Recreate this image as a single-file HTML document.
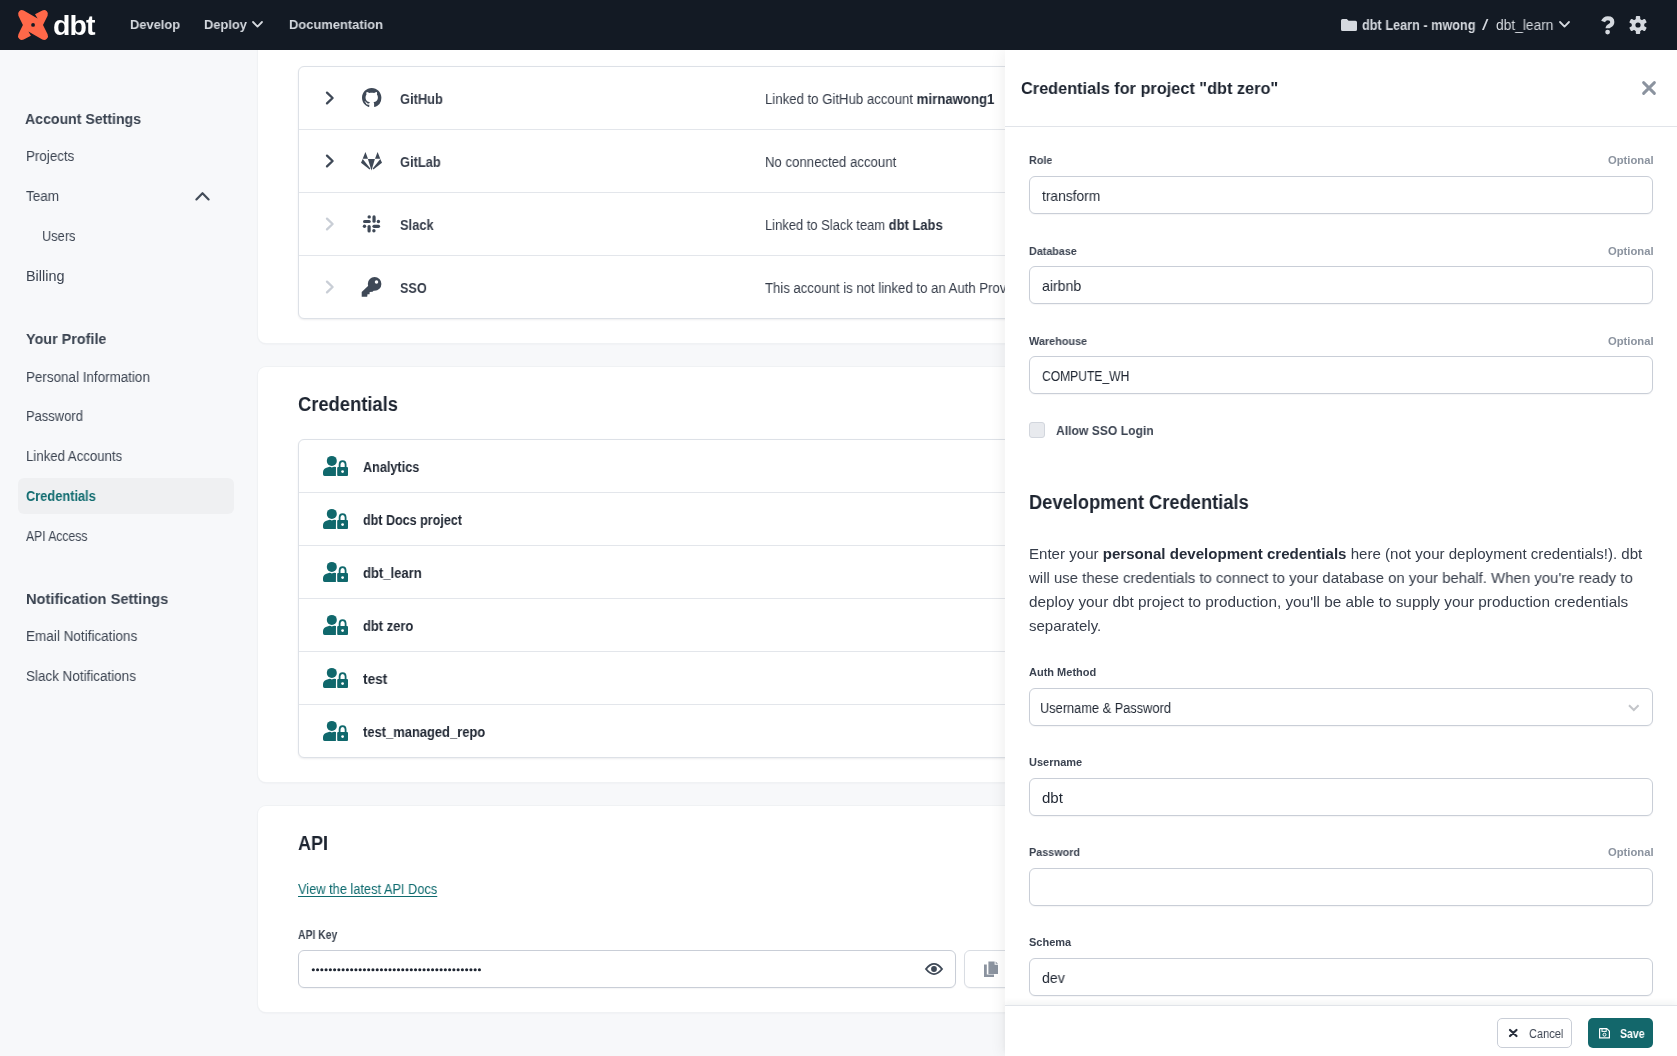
<!DOCTYPE html>
<html><head><meta charset="utf-8">
<style>
*{box-sizing:border-box;margin:0;padding:0}
html,body{width:1677px;height:1056px;overflow:hidden;background:#f7f8fa;font-family:"Liberation Sans",sans-serif}
.abs{position:absolute}
.t{position:absolute;white-space:nowrap;line-height:1;transform-origin:0 0;will-change:transform}
#nav{z-index:20;left:0;top:0;width:1677px;height:50px;background:#131a24}
#side{left:0;top:50px;width:258px;height:1006px;background:#f7f8fa}
.card{position:absolute;background:#fff;border-radius:8px;box-shadow:0 0 0 1px #f0f2f4,0 1px 2px rgba(20,30,45,.08)}
.tbl{position:absolute;background:#fff;border:1px solid #dde1e7;border-radius:6px;box-shadow:0 1px 2px rgba(20,30,45,.08)}
.hr{position:absolute;height:1px;background:#e3e6eb}
.inp{position:absolute;background:#fff;border:1px solid #c9ced7;border-radius:6px;box-shadow:0 1px 1px rgba(20,30,45,.04)}
#drawer{z-index:10;left:1005px;top:50px;width:672px;height:1006px;background:#fff;box-shadow:-2px 0 14px rgba(0,0,0,.065)}
svg{position:absolute;overflow:visible}
.nz{z-index:21}
.dz{z-index:11}
</style></head><body>
<div id="nav" class="abs"></div>
<!-- dbt logo -->
<svg class="nz" style="left:18px;top:10px" width="30" height="30" viewBox="0 0 30 30">
  <path d="M5.7 0.4 L19.6 8.6 L17 4.3 L24.3 0.4 A3.98 3.98 0 0 1 29.6 5.7 L25 14.9 L29.6 24.3 A3.98 3.98 0 0 1 24.3 29.6 L10.4 21.4 L12.9 25.7 L5.7 29.6 A3.98 3.98 0 0 1 0.4 24.3 L4.9 14.9 L0.4 5.7 A3.98 3.98 0 0 1 5.7 0.4 Z" fill="#ff6849"/>
  <circle cx="15.06" cy="14.9" r="1.9" fill="#131a24"/>
</svg>
<div class="t nz" style="left:52.6px;top:11.2px;font-size:28.5px;font-weight:700;color:#fff;letter-spacing:-0.9px">dbt</div>
<!-- deploy chevron -->
<svg class="nz" style="left:252px;top:21px" width="11" height="7" viewBox="0 0 11 7"><path d="M1 1 L5.5 5.6 L10 1" fill="none" stroke="#d5d9df" stroke-width="1.8" stroke-linecap="round" stroke-linejoin="round"/></svg>
<!-- folder -->
<svg class="nz" style="left:1341px;top:19px" width="16" height="12" viewBox="0 0 16 12"><path d="M1.5 0 H5.8 L7.6 1.8 H14.5 Q16 1.8 16 3.3 V10.5 Q16 12 14.5 12 H1.5 Q0 12 0 10.5 V1.5 Q0 0 1.5 0 Z" fill="#d5d9df"/></svg>
<!-- project chevron -->
<svg class="nz" style="left:1559px;top:21px" width="11" height="7" viewBox="0 0 11 7"><path d="M1 1 L5.5 5.6 L10 1" fill="none" stroke="#d5d9df" stroke-width="1.8" stroke-linecap="round" stroke-linejoin="round"/></svg>
<!-- question -->
<svg class="nz" style="left:1601px;top:15.5px" width="14" height="19" viewBox="0 0 14 19"><path d="M2.1 5.6 Q3.4 2.2 6.8 2.2 Q11.3 2.2 11.3 6 Q11.3 8.4 8.8 9.6 Q6.6 10.7 6.6 12.3" fill="none" stroke="#d5d9df" stroke-width="4.1" stroke-linejoin="round"/><circle cx="6.6" cy="16.1" r="2.4" fill="#d5d9df"/></svg>
<!-- gear -->
<svg class="nz" style="left:1638px;top:25px" width="1" height="1" viewBox="0 0 1 1">
  <g fill="#d5d9df">
    <circle r="6.3"/>
    <rect x="-2.2" y="-9" width="4.4" height="18" rx="0.9"/>
    <rect x="-2.2" y="-9" width="4.4" height="18" rx="0.9" transform="rotate(60)"/>
    <rect x="-2.2" y="-9" width="4.4" height="18" rx="0.9" transform="rotate(120)"/>
  </g>
  <circle r="2.6" fill="#131a24"/>
</svg>

<!-- sidebar -->
<div id="side" class="abs"></div>
<div class="abs" style="left:18px;top:478px;width:216px;height:36px;border-radius:6px;background:#eff0f2"></div>
<svg style="left:195px;top:191px" width="15" height="10" viewBox="0 0 15 10"><path d="M1.4 8.4 L7.5 2.2 L13.6 8.4" fill="none" stroke="#434c59" stroke-width="2.2" stroke-linecap="round" stroke-linejoin="round"/></svg>

<!-- card 1 -->
<div class="card" style="left:258px;top:20px;width:1000px;height:323px"></div>
<div class="tbl" style="left:298px;top:66px;width:900px;height:253px"></div>
<div class="hr" style="left:299px;top:129px;width:900px"></div>
<div class="hr" style="left:299px;top:192px;width:900px"></div>
<div class="hr" style="left:299px;top:255px;width:900px"></div>
<svg style="left:325px;top:91px" width="10" height="14" viewBox="0 0 10 14"><path d="M2 1.6 L7.6 7 L2 12.4" fill="none" stroke="#3f4957" stroke-width="2.3" stroke-linecap="round" stroke-linejoin="round"/></svg>
<svg style="left:325px;top:154px" width="10" height="14" viewBox="0 0 10 14"><path d="M2 1.6 L7.6 7 L2 12.4" fill="none" stroke="#3f4957" stroke-width="2.3" stroke-linecap="round" stroke-linejoin="round"/></svg>
<svg style="left:325px;top:217px" width="10" height="14" viewBox="0 0 10 14"><path d="M2 1.6 L7.6 7 L2 12.4" fill="none" stroke="#c9ced6" stroke-width="2.3" stroke-linecap="round" stroke-linejoin="round"/></svg>
<svg style="left:325px;top:280px" width="10" height="14" viewBox="0 0 10 14"><path d="M2 1.6 L7.6 7 L2 12.4" fill="none" stroke="#c9ced6" stroke-width="2.3" stroke-linecap="round" stroke-linejoin="round"/></svg>
<!-- github -->
<svg style="left:361.8px;top:88px" width="19.4" height="19.4" viewBox="0 0 16 16"><path fill="#3f4957" d="M8 0C3.58 0 0 3.58 0 8c0 3.54 2.29 6.53 5.47 7.59.4.07.55-.17.55-.38 0-.19-.01-.82-.01-1.49-2.01.37-2.53-.49-2.69-.94-.09-.23-.48-.94-.82-1.13-.28-.15-.68-.52-.01-.53.63-.01 1.08.58 1.23.82.72 1.21 1.87.87 2.33.66.07-.52.28-.87.51-1.07-1.78-.2-3.64-.89-3.64-3.95 0-.87.31-1.59.82-2.15-.08-.2-.36-1.02.08-2.12 0 0 .67-.21 2.2.82.64-.18 1.32-.27 2-.27.68 0 1.36.09 2 .27 1.53-1.04 2.2-.82 2.2-.82.44 1.1.16 1.92.08 2.12.51.56.82 1.27.82 2.15 0 3.07-1.87 3.75-3.65 3.95.29.25.54.73.54 1.48 0 1.07-.01 1.93-.01 2.2 0 .21.15.46.55.38A8.013 8.013 0 0016 8c0-4.42-3.58-8-8-8z"/></svg>
<!-- gitlab -->
<svg style="left:356px;top:146px" width="32" height="30" viewBox="0 0 32 30">
  <g fill="#3f4957">
    <path d="M9.4 6 L6.7 12.7 L12 12.7 Z"/>
    <path d="M21.6 6 L19 12.7 L24.3 12.7 Z"/>
    <path d="M11.9 13.1 L18.9 13.1 L15.5 24.4 Z"/>
    <path d="M6.7 13.1 L5.0 16.7 L13.6 23.4 L14.3 22.5 Z"/>
    <path d="M24.3 13.1 L26.0 16.7 L17.4 23.4 L16.7 22.5 Z"/>
  </g>
</svg>
<!-- slack -->
<svg style="left:356px;top:208px" width="32" height="32" viewBox="0 0 32 32">
  <g stroke="#3f4957" stroke-width="3.2" stroke-linecap="round">
    <line x1="18.05" y1="8.9" x2="18.05" y2="13.2"/>
    <line x1="8.6" y1="13.5" x2="13.2" y2="13.5"/>
    <line x1="13.1" y1="18.6" x2="13.1" y2="22.9"/>
    <line x1="18" y1="18.3" x2="22.5" y2="18.3"/>
  </g>
  <g fill="#3f4957">
    <circle cx="13.2" cy="8.9" r="1.7"/><circle cx="22.4" cy="13.5" r="1.7"/><circle cx="8.5" cy="18.3" r="1.7"/><circle cx="17.9" cy="22.7" r="1.7"/>
  </g>
</svg>
<!-- key -->
<svg style="left:361px;top:277px" width="21" height="20" viewBox="0 0 21 20">
  <circle cx="13.6" cy="6.9" r="6.8" fill="#3f4957"/>
  <path d="M0.7 15 L7.8 8.2 L13 13.2 L11.6 14.7 L8.7 14.9 L8.5 17.3 L6.5 17.3 L6.2 19.7 L0.7 19.7 Z" fill="#3f4957"/>
  <circle cx="15.5" cy="4.9" r="1.75" fill="#fff"/>
</svg>

<!-- card 2 -->
<div class="card" style="left:258px;top:367px;width:1000px;height:415px"></div>
<div class="tbl" style="left:298px;top:439px;width:900px;height:319px"></div>
<div class="hr" style="left:299px;top:492px;width:900px"></div>
<div class="hr" style="left:299px;top:545px;width:900px"></div>
<div class="hr" style="left:299px;top:598px;width:900px"></div>
<div class="hr" style="left:299px;top:651px;width:900px"></div>
<div class="hr" style="left:299px;top:704px;width:900px"></div>
<svg style="left:323px;top:456px" width="26" height="21" viewBox="0 0 26 21">
  <circle cx="8.8" cy="4.9" r="5" fill="#10686c"/>
  <path d="M5 11.2 Q7 10.4 8.8 11.4 Q10.8 10.4 13 11 L12.9 19.9 H1.6 Q0 19.9 0 18.2 V16 Q0 12.4 5 11.2 Z" fill="#10686c"/>
  <rect x="14.2" y="11.1" width="10.8" height="8.8" rx="1" fill="#10686c"/>
  <path d="M16.6 11.4 V8.6 Q16.6 5.1 19.6 5.1 Q22.6 5.1 22.6 8.6 V11.4" fill="none" stroke="#10686c" stroke-width="1.8"/>
  <circle cx="19.6" cy="15.6" r="1.4" fill="#fff"/>
</svg>
<svg style="left:323px;top:509px" width="26" height="21" viewBox="0 0 26 21">
  <circle cx="8.8" cy="4.9" r="5" fill="#10686c"/>
  <path d="M5 11.2 Q7 10.4 8.8 11.4 Q10.8 10.4 13 11 L12.9 19.9 H1.6 Q0 19.9 0 18.2 V16 Q0 12.4 5 11.2 Z" fill="#10686c"/>
  <rect x="14.2" y="11.1" width="10.8" height="8.8" rx="1" fill="#10686c"/>
  <path d="M16.6 11.4 V8.6 Q16.6 5.1 19.6 5.1 Q22.6 5.1 22.6 8.6 V11.4" fill="none" stroke="#10686c" stroke-width="1.8"/>
  <circle cx="19.6" cy="15.6" r="1.4" fill="#fff"/>
</svg>
<svg style="left:323px;top:562px" width="26" height="21" viewBox="0 0 26 21">
  <circle cx="8.8" cy="4.9" r="5" fill="#10686c"/>
  <path d="M5 11.2 Q7 10.4 8.8 11.4 Q10.8 10.4 13 11 L12.9 19.9 H1.6 Q0 19.9 0 18.2 V16 Q0 12.4 5 11.2 Z" fill="#10686c"/>
  <rect x="14.2" y="11.1" width="10.8" height="8.8" rx="1" fill="#10686c"/>
  <path d="M16.6 11.4 V8.6 Q16.6 5.1 19.6 5.1 Q22.6 5.1 22.6 8.6 V11.4" fill="none" stroke="#10686c" stroke-width="1.8"/>
  <circle cx="19.6" cy="15.6" r="1.4" fill="#fff"/>
</svg>
<svg style="left:323px;top:615px" width="26" height="21" viewBox="0 0 26 21">
  <circle cx="8.8" cy="4.9" r="5" fill="#10686c"/>
  <path d="M5 11.2 Q7 10.4 8.8 11.4 Q10.8 10.4 13 11 L12.9 19.9 H1.6 Q0 19.9 0 18.2 V16 Q0 12.4 5 11.2 Z" fill="#10686c"/>
  <rect x="14.2" y="11.1" width="10.8" height="8.8" rx="1" fill="#10686c"/>
  <path d="M16.6 11.4 V8.6 Q16.6 5.1 19.6 5.1 Q22.6 5.1 22.6 8.6 V11.4" fill="none" stroke="#10686c" stroke-width="1.8"/>
  <circle cx="19.6" cy="15.6" r="1.4" fill="#fff"/>
</svg>
<svg style="left:323px;top:668px" width="26" height="21" viewBox="0 0 26 21">
  <circle cx="8.8" cy="4.9" r="5" fill="#10686c"/>
  <path d="M5 11.2 Q7 10.4 8.8 11.4 Q10.8 10.4 13 11 L12.9 19.9 H1.6 Q0 19.9 0 18.2 V16 Q0 12.4 5 11.2 Z" fill="#10686c"/>
  <rect x="14.2" y="11.1" width="10.8" height="8.8" rx="1" fill="#10686c"/>
  <path d="M16.6 11.4 V8.6 Q16.6 5.1 19.6 5.1 Q22.6 5.1 22.6 8.6 V11.4" fill="none" stroke="#10686c" stroke-width="1.8"/>
  <circle cx="19.6" cy="15.6" r="1.4" fill="#fff"/>
</svg>
<svg style="left:323px;top:721px" width="26" height="21" viewBox="0 0 26 21">
  <circle cx="8.8" cy="4.9" r="5" fill="#10686c"/>
  <path d="M5 11.2 Q7 10.4 8.8 11.4 Q10.8 10.4 13 11 L12.9 19.9 H1.6 Q0 19.9 0 18.2 V16 Q0 12.4 5 11.2 Z" fill="#10686c"/>
  <rect x="14.2" y="11.1" width="10.8" height="8.8" rx="1" fill="#10686c"/>
  <path d="M16.6 11.4 V8.6 Q16.6 5.1 19.6 5.1 Q22.6 5.1 22.6 8.6 V11.4" fill="none" stroke="#10686c" stroke-width="1.8"/>
  <circle cx="19.6" cy="15.6" r="1.4" fill="#fff"/>
</svg>

<!-- card 3 -->
<div class="card" style="left:258px;top:806px;width:1000px;height:206px"></div>
<div class="inp" style="left:298px;top:950px;width:658px;height:38px"></div>
<svg style="left:310px;top:968px" width="172" height="4" viewBox="0 0 172 4"><circle cx="3.30" cy="1.7" r="1.55" fill="#1f2632"/><circle cx="7.56" cy="1.7" r="1.55" fill="#1f2632"/><circle cx="11.82" cy="1.7" r="1.55" fill="#1f2632"/><circle cx="16.08" cy="1.7" r="1.55" fill="#1f2632"/><circle cx="20.34" cy="1.7" r="1.55" fill="#1f2632"/><circle cx="24.60" cy="1.7" r="1.55" fill="#1f2632"/><circle cx="28.86" cy="1.7" r="1.55" fill="#1f2632"/><circle cx="33.12" cy="1.7" r="1.55" fill="#1f2632"/><circle cx="37.38" cy="1.7" r="1.55" fill="#1f2632"/><circle cx="41.64" cy="1.7" r="1.55" fill="#1f2632"/><circle cx="45.90" cy="1.7" r="1.55" fill="#1f2632"/><circle cx="50.16" cy="1.7" r="1.55" fill="#1f2632"/><circle cx="54.42" cy="1.7" r="1.55" fill="#1f2632"/><circle cx="58.68" cy="1.7" r="1.55" fill="#1f2632"/><circle cx="62.94" cy="1.7" r="1.55" fill="#1f2632"/><circle cx="67.20" cy="1.7" r="1.55" fill="#1f2632"/><circle cx="71.46" cy="1.7" r="1.55" fill="#1f2632"/><circle cx="75.72" cy="1.7" r="1.55" fill="#1f2632"/><circle cx="79.98" cy="1.7" r="1.55" fill="#1f2632"/><circle cx="84.24" cy="1.7" r="1.55" fill="#1f2632"/><circle cx="88.50" cy="1.7" r="1.55" fill="#1f2632"/><circle cx="92.76" cy="1.7" r="1.55" fill="#1f2632"/><circle cx="97.02" cy="1.7" r="1.55" fill="#1f2632"/><circle cx="101.28" cy="1.7" r="1.55" fill="#1f2632"/><circle cx="105.54" cy="1.7" r="1.55" fill="#1f2632"/><circle cx="109.80" cy="1.7" r="1.55" fill="#1f2632"/><circle cx="114.06" cy="1.7" r="1.55" fill="#1f2632"/><circle cx="118.32" cy="1.7" r="1.55" fill="#1f2632"/><circle cx="122.58" cy="1.7" r="1.55" fill="#1f2632"/><circle cx="126.84" cy="1.7" r="1.55" fill="#1f2632"/><circle cx="131.10" cy="1.7" r="1.55" fill="#1f2632"/><circle cx="135.36" cy="1.7" r="1.55" fill="#1f2632"/><circle cx="139.62" cy="1.7" r="1.55" fill="#1f2632"/><circle cx="143.88" cy="1.7" r="1.55" fill="#1f2632"/><circle cx="148.14" cy="1.7" r="1.55" fill="#1f2632"/><circle cx="152.40" cy="1.7" r="1.55" fill="#1f2632"/><circle cx="156.66" cy="1.7" r="1.55" fill="#1f2632"/><circle cx="160.92" cy="1.7" r="1.55" fill="#1f2632"/><circle cx="165.18" cy="1.7" r="1.55" fill="#1f2632"/><circle cx="169.44" cy="1.7" r="1.55" fill="#1f2632"/></svg>
<svg style="left:925px;top:962.8px" width="18" height="12" viewBox="0 0 18 12">
  <path d="M1 6 Q9 -4.2 17 6 Q9 16.2 1 6 Z" fill="none" stroke="#3f4957" stroke-width="1.9"/>
  <circle cx="9" cy="6" r="2.9" fill="#3f4957"/>
</svg>
<div class="inp" style="left:964px;top:950px;width:80px;height:38px;border-color:#d9dde3"></div>
<svg style="left:984px;top:960.8px" width="14" height="16" viewBox="0 0 14 16">
  <path d="M0 3.4 H2.8 V13.6 H10 V16 H0 Z" fill="#8b939f"/>
  <path d="M4.4 0.4 H10.6 V3.8 H14 V13 H4.4 Z" fill="#8b939f"/>
  <path d="M11.6 0.4 L14 2.8 H11.6 Z" fill="#8b939f"/>
</svg>

<!-- drawer -->
<div id="drawer" class="abs"></div>
<div class="hr dz" style="left:1005px;top:126px;width:672px;background:#e1e4e9"></div>
<svg class="dz" style="left:1641.6px;top:81px" width="14" height="14" viewBox="0 0 14 14"><path d="M1.6 1.6 L12.4 12.4 M12.4 1.6 L1.6 12.4" stroke="#8b939f" stroke-width="2.9" stroke-linecap="round"/></svg>
<div class="inp dz" style="left:1029px;top:176px;width:624px;height:38px"></div>
<div class="inp dz" style="left:1029px;top:266px;width:624px;height:38px"></div>
<div class="inp dz" style="left:1029px;top:356px;width:624px;height:38px"></div>
<div class="abs dz" style="left:1029px;top:422px;width:16px;height:16px;border-radius:3px;background:#e8eaee;border:1px solid #d2d6dd"></div>
<div class="inp dz" style="left:1029px;top:688px;width:624px;height:38px"></div>
<svg class="dz" style="left:1628.4px;top:703.5px" width="11.6" height="7.5" viewBox="0 0 11.6 7.5"><path d="M1 1.2 L5.8 6 L10.6 1.2" fill="none" stroke="#c3c5c9" stroke-width="2" stroke-linecap="butt" stroke-linejoin="miter"/></svg>
<div class="inp dz" style="left:1029px;top:778px;width:624px;height:38px"></div>
<div class="inp dz" style="left:1029px;top:868px;width:624px;height:38px"></div>
<div class="inp dz" style="left:1029px;top:958px;width:624px;height:38px"></div>
<!-- footer -->
<div class="abs dz" style="left:1005px;top:1005px;width:672px;height:51px;background:#fff;border-top:1px solid #e1e4e9;box-shadow:0 -3px 6px rgba(20,30,45,.05)"></div>
<div class="abs dz" style="left:1497px;top:1018px;width:75px;height:30px;border:1px solid #c9ced7;border-radius:5px;background:#fff"></div>
<svg class="dz" style="left:1509.4px;top:1029.4px" width="8.5" height="8" viewBox="0 0 8.5 8"><path d="M1 1 L7.5 7 M7.5 1 L1 7" stroke="#262d3a" stroke-width="2.2" stroke-linecap="round"/></svg>
<div class="abs dz" style="left:1588px;top:1018px;width:65px;height:30px;border-radius:5px;background:#13676b"></div>
<svg class="dz" style="left:1599px;top:1028px" width="11" height="10.5" viewBox="0 0 11 10.5">
  <path d="M1 0.6 H7.8 L10.4 3.2 V9.9 H0.6 V1 Z" fill="none" stroke="#fff" stroke-width="1.2" stroke-linejoin="round"/>
  <rect x="3" y="0.6" width="4.2" height="2.8" fill="none" stroke="#fff" stroke-width="1"/>
  <circle cx="5.5" cy="6.7" r="1.5" fill="none" stroke="#fff" stroke-width="1"/>
</svg>
<div class="t nz" id="t0" style="left:130.23px;top:17.77px;font-size:13.5px;font-weight:700;color:#d5d9df;transform:scaleX(0.9541);">Develop</div>
<div class="t nz" id="t1" style="left:203.53px;top:17.77px;font-size:13.5px;font-weight:700;color:#d5d9df;transform:scaleX(0.9534);">Deploy</div>
<div class="t nz" id="t2" style="left:288.82px;top:17.77px;font-size:13.5px;font-weight:700;color:#d5d9df;transform:scaleX(0.9568);">Documentation</div>
<div class="t nz" id="t3" style="left:1362.24px;top:18.35px;font-size:14px;font-weight:700;color:#d5d9df;transform:scaleX(0.9063);">dbt Learn - mwong</div>
<div class="t nz" id="t4" style="left:1481.62px;top:18.35px;font-size:14px;font-weight:400;color:#d5d9df;transform:scaleX(1.6398);">/</div>
<div class="t nz" id="t5" style="left:1495.77px;top:18.35px;font-size:14px;font-weight:400;color:#d5d9df;transform:scaleX(0.9844);">dbt_learn</div>
<div class="t" id="t6" style="left:25.35px;top:111.20px;font-size:15px;font-weight:700;color:#3a4350;transform:scaleX(0.9405);">Account Settings</div>
<div class="t" id="t7" style="left:25.60px;top:149.35px;font-size:14px;font-weight:400;color:#3c4451;transform:scaleX(0.9546);">Projects</div>
<div class="t" id="t8" style="left:25.59px;top:189.35px;font-size:14px;font-weight:400;color:#3c4451;transform:scaleX(0.9663);">Team</div>
<div class="t" id="t9" style="left:41.63px;top:229.35px;font-size:14px;font-weight:400;color:#3c4451;transform:scaleX(0.9157);">Users</div>
<div class="t" id="t10" style="left:25.53px;top:269.15px;font-size:14px;font-weight:400;color:#3c4451;transform:scaleX(1.0300);">Billing</div>
<div class="t" id="t11" style="left:25.54px;top:331.20px;font-size:15px;font-weight:700;color:#3a4350;transform:scaleX(0.9582);">Your Profile</div>
<div class="t" id="t12" style="left:25.59px;top:369.55px;font-size:14px;font-weight:400;color:#3c4451;transform:scaleX(0.9589);">Personal Information</div>
<div class="t" id="t13" style="left:25.62px;top:409.35px;font-size:14px;font-weight:400;color:#3c4451;transform:scaleX(0.9253);">Password</div>
<div class="t" id="t14" style="left:25.61px;top:449.35px;font-size:14px;font-weight:400;color:#3c4451;transform:scaleX(0.9432);">Linked Accounts</div>
<div class="t" id="t15" style="left:25.63px;top:489.15px;font-size:14px;font-weight:700;color:#0f6b6f;transform:scaleX(0.9151);">Credentials</div>
<div class="t" id="t16" style="left:25.67px;top:529.15px;font-size:14px;font-weight:400;color:#3c4451;transform:scaleX(0.8668);">API Access</div>
<div class="t" id="t17" style="left:25.52px;top:590.90px;font-size:15px;font-weight:700;color:#3a4350;transform:scaleX(0.9757);">Notification Settings</div>
<div class="t" id="t18" style="left:25.59px;top:629.35px;font-size:14px;font-weight:400;color:#3c4451;transform:scaleX(0.9663);">Email Notifications</div>
<div class="t" id="t19" style="left:25.59px;top:669.35px;font-size:14px;font-weight:400;color:#3c4451;transform:scaleX(0.9606);">Slack Notifications</div>
<div class="t" id="t20" style="left:399.83px;top:92.25px;font-size:14px;font-weight:700;color:#363d4a;transform:scaleX(0.9191);">GitHub</div>
<div class="t" id="t21" style="left:399.83px;top:155.25px;font-size:14px;font-weight:700;color:#363d4a;transform:scaleX(0.9174);">GitLab</div>
<div class="t" id="t22" style="left:399.83px;top:218.25px;font-size:14px;font-weight:700;color:#363d4a;transform:scaleX(0.9204);">Slack</div>
<div class="t" id="t23" style="left:399.84px;top:281.25px;font-size:14px;font-weight:700;color:#363d4a;transform:scaleX(0.9020);">SSO</div>
<div class="t" id="t24" style="left:764.51px;top:92.35px;font-size:14px;font-weight:400;color:#363d4a;transform:scaleX(0.9417);">Linked to GitHub account <b style="color:#262d3a">mirnawong1</b></div>
<div class="t" id="t25" style="left:764.51px;top:155.35px;font-size:14px;font-weight:400;color:#363d4a;transform:scaleX(0.9422);">No connected account</div>
<div class="t" id="t26" style="left:764.52px;top:218.35px;font-size:14px;font-weight:400;color:#363d4a;transform:scaleX(0.9244);">Linked to Slack team <b style="color:#262d3a">dbt Labs</b></div>
<div class="t" id="t27" style="left:764.51px;top:281.35px;font-size:14px;font-weight:400;color:#363d4a;transform:scaleX(0.9400);">This account is not linked to an Auth Provider</div>
<div class="t" id="t28" style="left:298.10px;top:394.37px;font-size:20px;font-weight:700;color:#1d2430;transform:scaleX(0.9180);">Credentials</div>
<div class="t" id="t29" style="left:363.24px;top:459.95px;font-size:14px;font-weight:700;color:#1f2632;transform:scaleX(0.9041);">Analytics</div>
<div class="t" id="t30" style="left:363.25px;top:512.95px;font-size:14px;font-weight:700;color:#1f2632;transform:scaleX(0.8960);">dbt Docs project</div>
<div class="t" id="t31" style="left:363.22px;top:565.95px;font-size:14px;font-weight:700;color:#1f2632;transform:scaleX(0.9312);">dbt_learn</div>
<div class="t" id="t32" style="left:363.23px;top:618.95px;font-size:14px;font-weight:700;color:#1f2632;transform:scaleX(0.9215);">dbt zero</div>
<div class="t" id="t33" style="left:363.18px;top:671.95px;font-size:14px;font-weight:700;color:#1f2632;transform:scaleX(0.9708);">test</div>
<div class="t" id="t34" style="left:363.22px;top:724.95px;font-size:14px;font-weight:700;color:#1f2632;transform:scaleX(0.9236);">test_managed_repo</div>
<div class="t" id="t35" style="left:297.92px;top:832.97px;font-size:20px;font-weight:700;color:#1d2430;transform:scaleX(0.8997);">API</div>
<div class="t" id="t36" style="left:298.43px;top:882.05px;font-size:14px;font-weight:400;color:#0f6b6f;transform:scaleX(0.9147);text-decoration:underline;text-underline-offset:2px;">View the latest API Docs</div>
<div class="t" id="t37" style="left:297.58px;top:928.64px;font-size:12px;font-weight:700;color:#3d4552;transform:scaleX(0.8651);">API Key</div>
<div class="t dz" id="t38" style="left:1020.72px;top:79.81px;font-size:17px;font-weight:700;color:#1b222e;transform:scaleX(0.9583);">Credentials for project "dbt zero"</div>
<div class="t dz" id="t39" style="left:1028.95px;top:155.49px;font-size:11px;font-weight:700;color:#3b4351;transform:scaleX(0.9780);">Role</div>
<div class="t dz" id="t40" style="left:1608.03px;top:155.49px;font-size:11px;font-weight:700;color:#8b939f;transform:scaleX(1.0227);">Optional</div>
<div class="t dz" id="t41" style="left:1041.67px;top:188.93px;font-size:14.5px;font-weight:400;color:#1f2632;transform:scaleX(0.9509);">transform</div>
<div class="t dz" id="t42" style="left:1028.95px;top:245.59px;font-size:11px;font-weight:700;color:#3b4351;transform:scaleX(0.9775);">Database</div>
<div class="t dz" id="t43" style="left:1608.03px;top:245.59px;font-size:11px;font-weight:700;color:#8b939f;transform:scaleX(1.0227);">Optional</div>
<div class="t dz" id="t44" style="left:1041.65px;top:279.03px;font-size:14.5px;font-weight:400;color:#1f2632;transform:scaleX(0.9734);">airbnb</div>
<div class="t dz" id="t45" style="left:1028.95px;top:335.79px;font-size:11px;font-weight:700;color:#3b4351;transform:scaleX(0.9869);">Warehouse</div>
<div class="t dz" id="t46" style="left:1608.03px;top:335.79px;font-size:11px;font-weight:700;color:#8b939f;transform:scaleX(1.0227);">Optional</div>
<div class="t dz" id="t47" style="left:1041.77px;top:369.23px;font-size:14.5px;font-weight:400;color:#1f2632;transform:scaleX(0.8339);">COMPUTE_WH</div>
<div class="t dz" id="t48" style="left:1028.94px;top:757.09px;font-size:11px;font-weight:700;color:#3b4351;transform:scaleX(0.9928);">Username</div>
<div class="t dz" id="t49" style="left:1041.60px;top:790.53px;font-size:14.5px;font-weight:400;color:#1f2632;transform:scaleX(1.0381);">dbt</div>
<div class="t dz" id="t50" style="left:1028.95px;top:847.09px;font-size:11px;font-weight:700;color:#3b4351;transform:scaleX(0.9817);">Password</div>
<div class="t dz" id="t51" style="left:1608.03px;top:847.09px;font-size:11px;font-weight:700;color:#8b939f;transform:scaleX(1.0227);">Optional</div>
<div class="t dz" id="t52" style="left:1028.94px;top:937.09px;font-size:11px;font-weight:700;color:#3b4351;">Schema</div>
<div class="t dz" id="t53" style="left:1041.65px;top:970.53px;font-size:14.5px;font-weight:400;color:#1f2632;transform:scaleX(0.9722);">dev</div>
<div class="t dz" id="t54" style="left:1056.47px;top:424.27px;font-size:13.5px;font-weight:700;color:#3b4351;transform:scaleX(0.8986);">Allow SSO Login</div>
<div class="t dz" id="t55" style="left:1028.50px;top:492.79px;font-size:19.5px;font-weight:700;color:#1d2430;transform:scaleX(0.9387);">Development Credentials</div>
<div class="t dz" id="t56" style="left:1028.70px;top:546.30px;font-size:15px;font-weight:400;color:#363d4a;transform:scaleX(1.0049);">Enter your <b style="color:#262d3a">personal development credentials</b> here (not your deployment credentials!). dbt</div>
<div class="t dz" id="t57" style="left:1028.70px;top:570.30px;font-size:15px;font-weight:400;color:#363d4a;transform:scaleX(0.9968);">will use these credentials to connect to your database on your behalf. When you're ready to</div>
<div class="t dz" id="t58" style="left:1028.68px;top:594.30px;font-size:15px;font-weight:400;color:#363d4a;transform:scaleX(1.0217);">deploy your dbt project to production, you'll be able to supply your production credentials</div>
<div class="t dz" id="t59" style="left:1028.70px;top:618.30px;font-size:15px;font-weight:400;color:#363d4a;">separately.</div>
<div class="t dz" id="t60" style="left:1028.94px;top:667.39px;font-size:11px;font-weight:700;color:#3b4351;transform:scaleX(0.9973);">Auth Method</div>
<div class="t dz" id="t61" style="left:1039.53px;top:700.95px;font-size:14px;font-weight:400;color:#1f2632;transform:scaleX(0.9141);">Username &amp; Password</div>
<div class="t dz" id="t62" style="left:1529.34px;top:1027.72px;font-size:12.5px;font-weight:400;color:#3d4552;transform:scaleX(0.8813);">Cancel</div>
<div class="t dz" id="t63" style="left:1619.77px;top:1027.72px;font-size:12.5px;font-weight:700;color:#ffffff;transform:scaleX(0.8424);">Save</div>
</body></html>
